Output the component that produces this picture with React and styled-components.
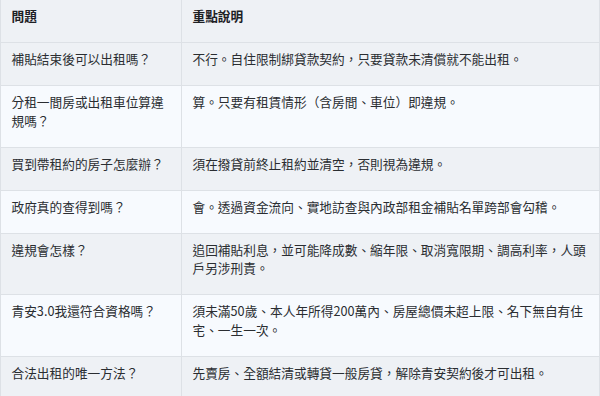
import React from "react";
import styled, { createGlobalStyle } from "styled-components";

const Global = createGlobalStyle`
  html, body { margin: 0; padding: 0; background: #ffffff; }
  body { font-family: "Noto Sans CJK TC", "Noto Sans", sans-serif; }
`;

const Wrap = styled.div`
  width: 600px;
`;

const Table = styled.table`
  width: 600px;
  border-collapse: collapse;
  table-layout: fixed;
  font-family: "Noto Sans CJK TC", sans-serif;
  font-size: 12.7px;
  line-height: 18.5px;
  color: #2a2d31;
`;

const Row = styled.tr`
  background: ${(p) => (p.$alt ? "#f7fafe" : "#eef1f5")};
`;

const Cell = styled.td`
  border: 1px solid #dde1e6;
  padding: 7px 10.5px 16.5px;
  vertical-align: top;
  text-align: left;
`;

const Head = styled(Cell).attrs({ as: "th" })`
  border-top: none;
  font-weight: 700;
  color: #1d2024;
`;

const rows = [
  ["補貼結束後可以出租嗎？", "不行。自住限制綁貸款契約，只要貸款未清償就不能出租。"],
  ["分租一間房或出租車位算違規嗎？", "算。只要有租賃情形（含房間、車位）即違規。"],
  ["買到帶租約的房子怎麼辦？", "須在撥貸前終止租約並清空，否則視為違規。"],
  ["政府真的查得到嗎？", "會。透過資金流向、實地訪查與內政部租金補貼名單跨部會勾稽。"],
  ["違規會怎樣？", "追回補貼利息，並可能降成數、縮年限、取消寬限期、調高利率，人頭戶另涉刑責。"],
  ["青安3.0我還符合資格嗎？", "須未滿50歲、本人年所得200萬內、房屋總價未超上限、名下無自有住宅、一生一次。"],
  ["合法出租的唯一方法？", "先賣房、全額結清或轉貸一般房貸，解除青安契約後才可出租。"],
];

export default function App() {
  return (
    <Wrap lang="zh-Hant-TW">
      <Global />
      <Table>
        <colgroup>
          <col style={{ width: "181px" }} />
          <col />
        </colgroup>
        <thead>
          <Row>
            <Head>問題</Head>
            <Head>重點說明</Head>
          </Row>
        </thead>
        <tbody>
          {rows.map(([q, a], i) => (
            <Row key={i} $alt={i % 2 === 1}>
              <Cell>{q}</Cell>
              <Cell>{a}</Cell>
            </Row>
          ))}
        </tbody>
      </Table>
    </Wrap>
  );
}
